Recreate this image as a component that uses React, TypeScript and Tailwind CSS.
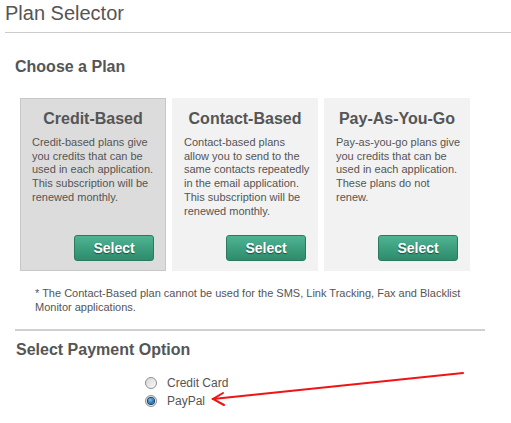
import React from "react";

type Plan = {
  title: string;
  lines: string[];
  active?: boolean;
};

const plans: Plan[] = [
  {
    title: "Credit-Based",
    lines: [
      "Credit-based plans give",
      "you credits that can be",
      "used in each application.",
      "This subscription will be",
      "renewed monthly.",
    ],
    active: true,
  },
  {
    title: "Contact-Based",
    lines: [
      "Contact-based plans",
      "allow you to send to the",
      "same contacts repeatedly",
      "in the email application.",
      "This subscription will be",
      "renewed monthly.",
    ],
  },
  {
    title: "Pay-As-You-Go",
    lines: [
      "Pay-as-you-go plans give",
      "you credits that can be",
      "used in each application.",
      "These plans do not",
      "renew.",
    ],
  },
];

const PlanCard = ({ plan }: { plan: Plan }) => (
  <div
    className={
      plan.active
        ? "w-[146px] h-[173px] flex flex-col border border-[#c8c8c8] bg-[#dcdcdc] pl-[11px] pr-[2px] pt-[10px] pb-[9px]"
        : "w-[146px] h-[173px] flex flex-col border border-[#f2f2f2] bg-[#f2f2f2] pl-[11px] pr-[2px] pt-[10px] pb-[9px]"
    }
  >
    <h3 className="pr-[9px] text-center text-[16px] leading-[20px] font-bold text-[#555]">{plan.title}</h3>
    <p className="mt-[7px] whitespace-nowrap text-[11px] leading-[13.7px] text-[#555]">
      {plan.lines.map((l, i) => (
        <React.Fragment key={i}>
          {l}
          {i < plan.lines.length - 1 && <br />}
        </React.Fragment>
      ))}
    </p>
    <div className="mt-auto pr-[9px] flex justify-end">
      <button className="w-[80px] h-[26px] rounded-[3px] border border-[#2b7a5f] bg-gradient-to-b from-[#4fb393] to-[#2c8c6b] text-[14px] font-bold text-white [text-shadow:0_1px_1px_#1d4d3c]">
        Select
      </button>
    </div>
  </div>
);

const Radio = ({ checked }: { checked?: boolean }) => (
  <span className="w-[12px] h-[12px] rounded-full border border-[#8f8f8f] bg-gradient-to-br from-[#d6d6d6] to-[#fafafa] flex items-center justify-center">
    {checked && (
      <span className="w-[6px] h-[6px] rounded-full bg-[radial-gradient(circle_at_40%_35%,#7cc4f0,#1b62a3_70%)] ring-1 ring-[#0d3f6e]" />
    )}
  </span>
);

export default function App() {
  return (
    <div className="relative w-[511px] h-[423px] overflow-hidden bg-white font-['Liberation_Sans',Arial,sans-serif] text-[#555]">
      <h1 className="pl-[5px] pt-[1px] text-[20px] leading-[24px]">Plan Selector</h1>
      <div className="ml-[5px] mt-[7px] h-px bg-[#cccccc]" />

      <h2 className="ml-[15px] mt-[24px] text-[16px] leading-[20px] font-bold">Choose a Plan</h2>

      <div className="ml-[20px] mt-[21px] flex gap-[6px]">
        {plans.map((p) => (
          <PlanCard key={p.title} plan={p} />
        ))}
      </div>

      <p className="ml-[35px] mt-[15px] w-[430px] text-[11px] leading-[14px]">
        * The Contact-Based plan cannot be used for the SMS, Link Tracking, Fax and Blacklist Monitor applications.
      </p>

      <div className="ml-[15px] mt-[15px] w-[470px] h-[2px] bg-[#d0d0d0]" />

      <h2 className="ml-[16px] mt-[9px] text-[16px] leading-[20px] font-bold">Select Payment Option</h2>

      <div className="ml-[145px] mt-[17px] flex flex-col gap-[6px] text-[12px] leading-[12px]">
        <label className="flex items-center gap-[10px]">
          <Radio />
          <span>Credit Card</span>
        </label>
        <label className="flex items-center gap-[10px]">
          <Radio checked />
          <span>PayPal</span>
        </label>
      </div>

      {/* red annotation arrow */}
      <svg className="absolute left-0 top-0 pointer-events-none" width="511" height="423" viewBox="0 0 511 423">
        <g stroke="#f01414" strokeWidth="2" fill="none" strokeLinecap="round">
          <line x1="463" y1="373" x2="213" y2="399" />
          <polyline points="223,393 213,399 224,405" />
        </g>
      </svg>
    </div>
  );
}
